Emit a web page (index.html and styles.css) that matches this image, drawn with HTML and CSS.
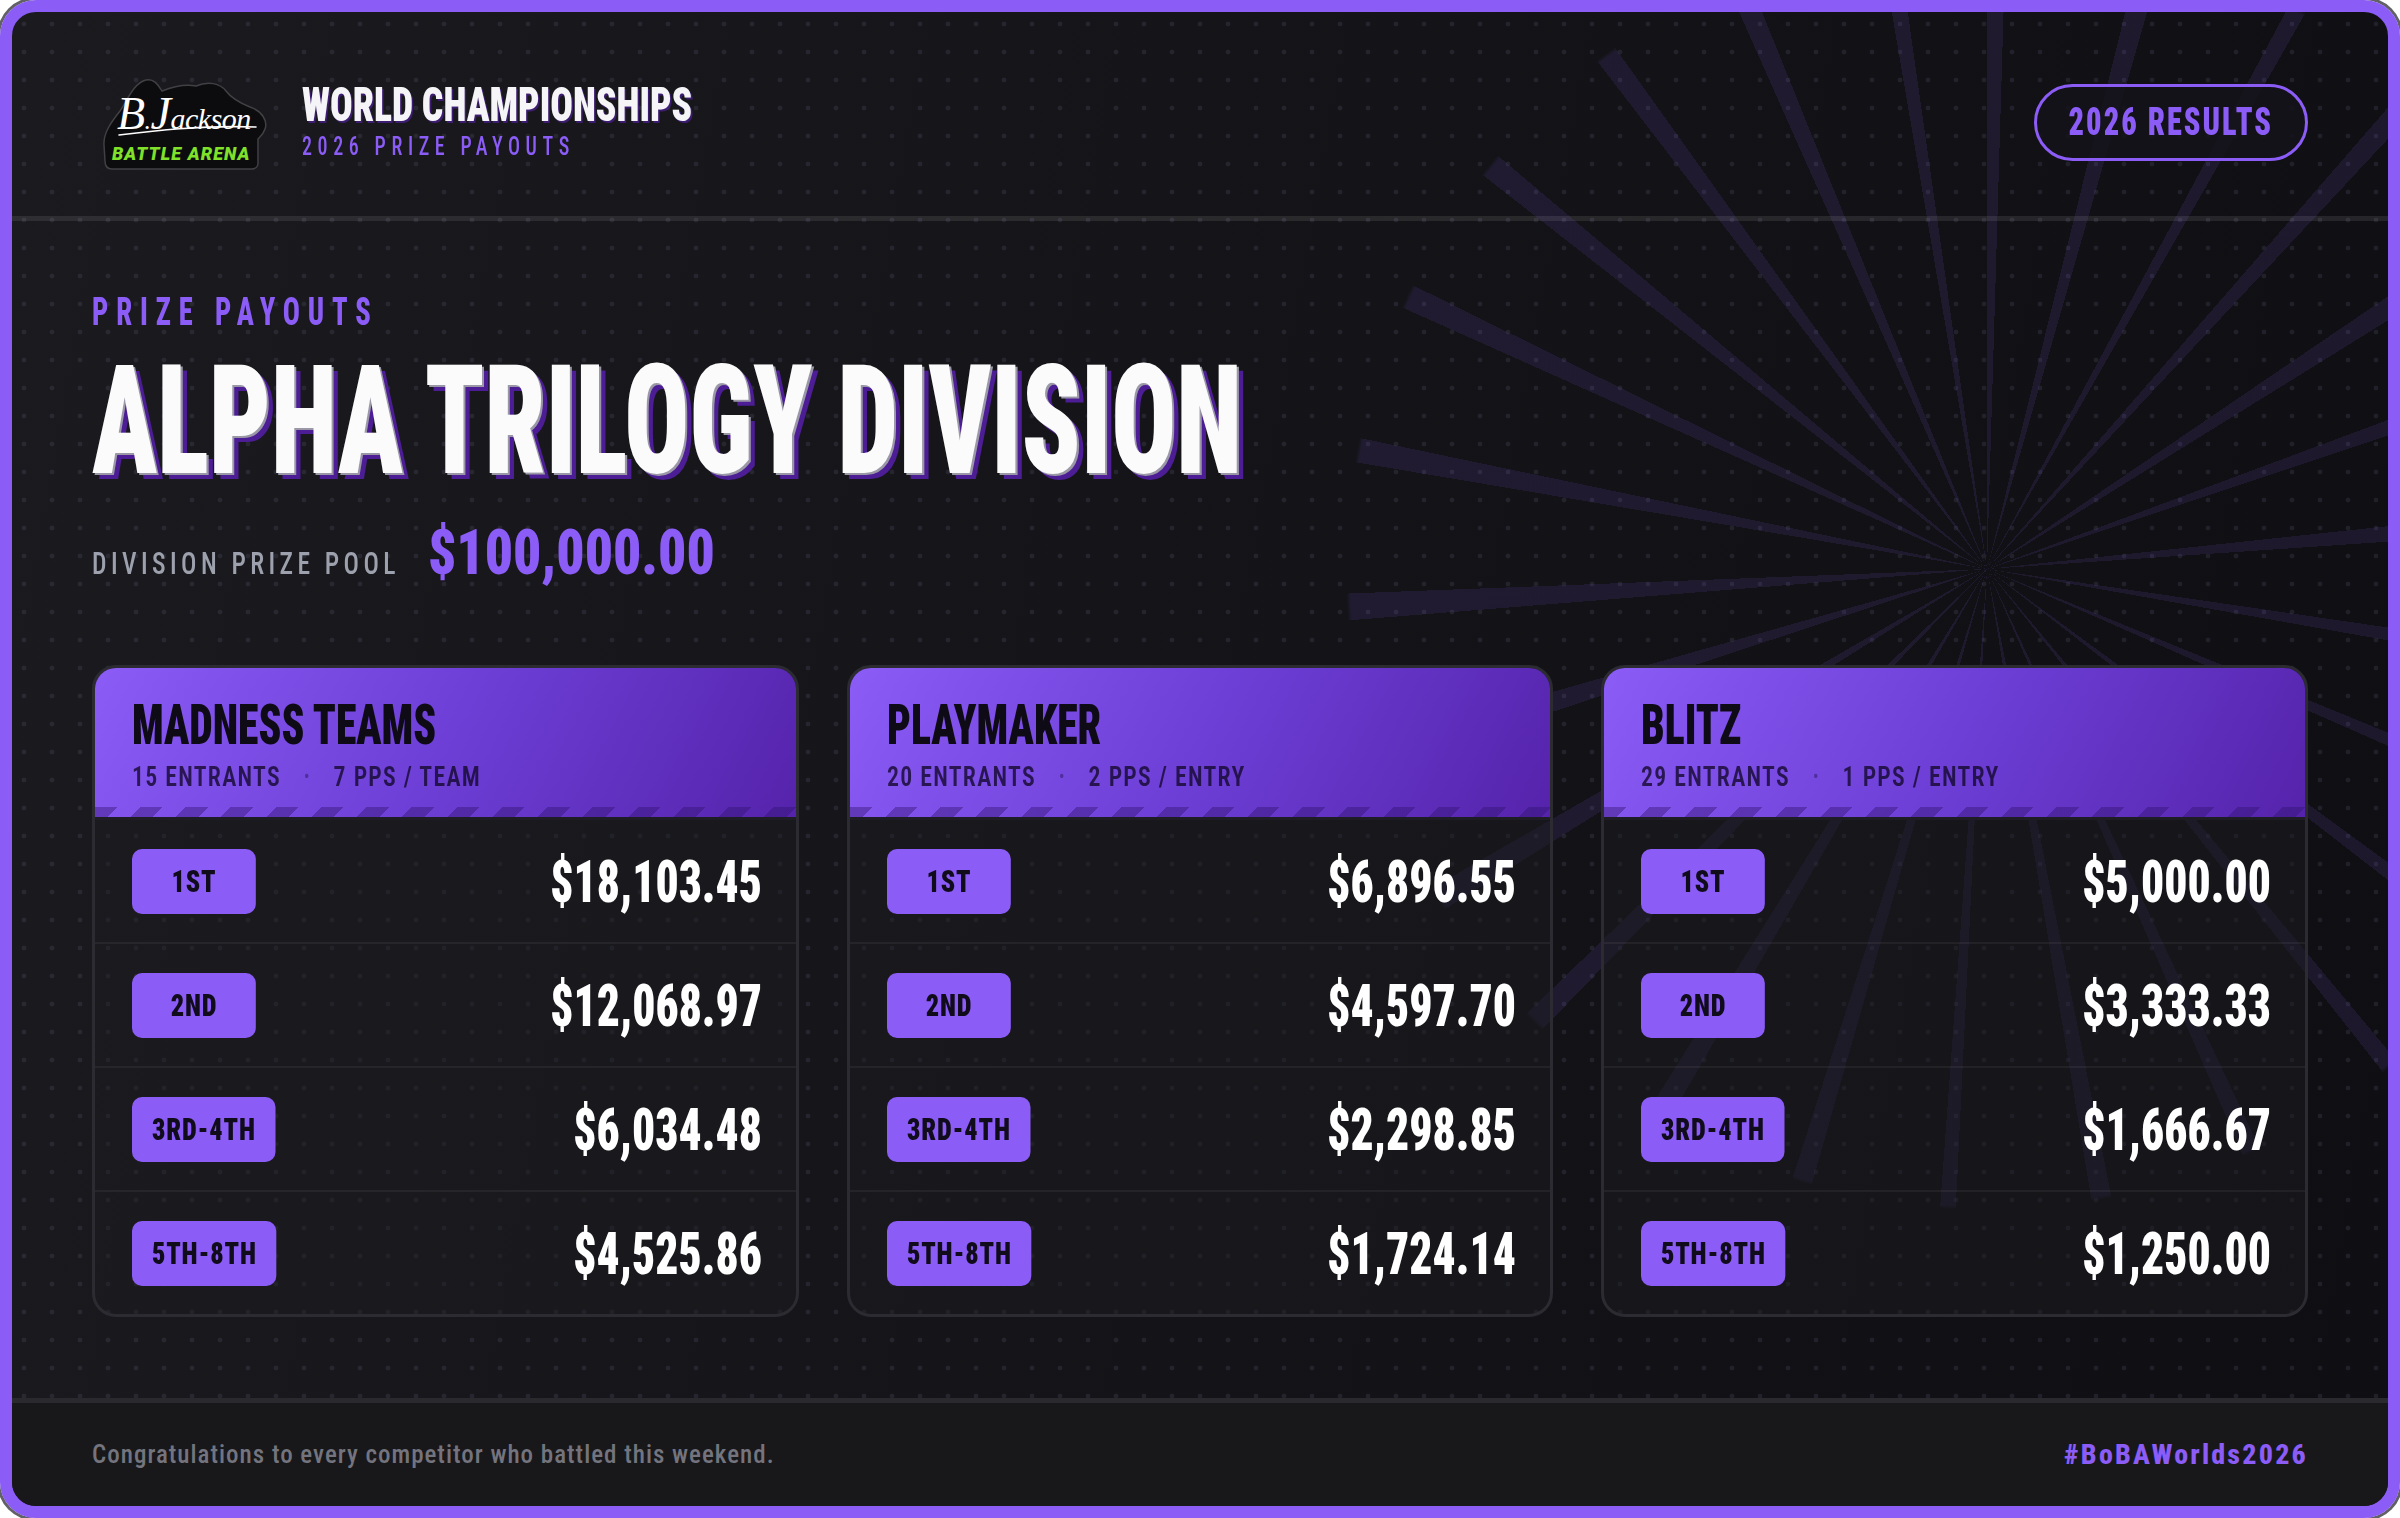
FILE: index.html
```html
<!DOCTYPE html>
<html lang="en">
<head>
<meta charset="utf-8">
<title>World Championships – 2026 Prize Payouts</title>
<link rel="stylesheet" href="styles.css">
</head>
<body>
<div class="frame">
  <div class="rays"></div>

  <header class="top">
    <div class="brand">
      <svg class="logo" width="180" height="100" viewBox="0 0 180 100" aria-label="BJackson Battle Arena">
        <path d="M20 94 C15 94 13 91 13 86 L12 70 C11 58 20 46 28 36 C36 24 42 8 54 5 C62 3 66 10 70 16 C80 12 92 9 104 11 C116 6 128 8 134 16 C140 24 148 28 158 32 C170 36 176 46 173 54 C171 60 168 62 166 64 L166 88 C166 92 163 94 160 94 Z" fill="#0c0c0e" stroke="#414145" stroke-width="1.5"/>
        <text x="25" y="54" class="sig"><tspan font-size="46">B</tspan><tspan font-size="26">.</tspan><tspan font-size="46">J</tspan><tspan font-size="30">ackson</tspan></text>
        <path d="M27 60 C60 56 110 50 164 52" fill="none" stroke="#ffffff" stroke-width="1.6" stroke-linecap="round"/>
        <text x="20" y="85" class="arena">BATTLE ARENA</text>
      </svg>
      <div class="brand-text">
        <div class="brand-title"><span class="sq">WORLD CHAMPIONSHIPS</span></div>
        <div class="brand-sub"><span class="sq">2026 PRIZE PAYOUTS</span></div>
      </div>
    </div>
    <div class="pill"><span class="sq">2026 RESULTS</span></div>
  </header>

  <main class="main">
    <div class="eyebrow"><span class="sq">PRIZE PAYOUTS</span></div>
    <h1 class="title"><span class="sq">ALPHA TRILOGY DIVISION</span></h1>
    <div class="pool">
      <span class="pool-label sq">DIVISION PRIZE POOL</span>
      <span class="pool-amt sq">$100,000.00</span>
    </div>

    <div class="cards">
      <section class="card">
        <div class="card-head">
          <div class="card-title"><span class="sq">MADNESS TEAMS</span></div>
          <div class="card-meta"><span class="sq">15 ENTRANTS<span class="sep">•</span>7 PPS / TEAM</span></div>
          <div class="stripes"></div>
        </div>
        <div class="rows">
          <div class="row"><span class="badge">1ST</span><span class="amt">$18,103.45</span></div>
          <div class="row"><span class="badge">2ND</span><span class="amt">$12,068.97</span></div>
          <div class="row"><span class="badge">3RD-4TH</span><span class="amt">$6,034.48</span></div>
          <div class="row"><span class="badge">5TH-8TH</span><span class="amt">$4,525.86</span></div>
        </div>
      </section>

      <section class="card">
        <div class="card-head">
          <div class="card-title"><span class="sq">PLAYMAKER</span></div>
          <div class="card-meta"><span class="sq">20 ENTRANTS<span class="sep">•</span>2 PPS / ENTRY</span></div>
          <div class="stripes"></div>
        </div>
        <div class="rows">
          <div class="row"><span class="badge">1ST</span><span class="amt">$6,896.55</span></div>
          <div class="row"><span class="badge">2ND</span><span class="amt">$4,597.70</span></div>
          <div class="row"><span class="badge">3RD-4TH</span><span class="amt">$2,298.85</span></div>
          <div class="row"><span class="badge">5TH-8TH</span><span class="amt">$1,724.14</span></div>
        </div>
      </section>

      <section class="card">
        <div class="card-head">
          <div class="card-title"><span class="sq">BLITZ</span></div>
          <div class="card-meta"><span class="sq">29 ENTRANTS<span class="sep">•</span>1 PPS / ENTRY</span></div>
          <div class="stripes"></div>
        </div>
        <div class="rows">
          <div class="row"><span class="badge">1ST</span><span class="amt">$5,000.00</span></div>
          <div class="row"><span class="badge">2ND</span><span class="amt">$3,333.33</span></div>
          <div class="row"><span class="badge">3RD-4TH</span><span class="amt">$1,666.67</span></div>
          <div class="row"><span class="badge">5TH-8TH</span><span class="amt">$1,250.00</span></div>
        </div>
      </section>
    </div>
  </main>

  <footer class="foot">
    <span class="foot-text">Congratulations to every competitor who battled this weekend.</span>
    <span class="hashtag">#BoBAWorlds2026</span>
  </footer>
</div>
</body>
</html>
```
FILE: styles.css
```css
html, body {
  margin: 0;
  padding: 0;
  background: #ffffff;
}

.frame {
  --purple: #8b5cf6;
  position: relative;
  width: 2400px;
  height: 1518px;
  box-sizing: border-box;
  border: 12px solid var(--purple);
  border-radius: 36px;
  box-shadow: 0 0 0 3px #626266;
  overflow: hidden;
  display: flex;
  flex-direction: column;
  font-family: Roboto, "Open Sans", sans-serif;
  font-stretch: 75%;
  background:
    radial-gradient(circle at 12px 12px, rgba(120, 118, 160, 0.16) 2px, transparent 2.7px) 0 0 / 28px 28px,
    linear-gradient(100deg, #1b1b1f 0%, #151519 45%, #0f0f13 100%);
}

/* decorative starburst behind the content */
.rays {
  position: absolute;
  inset: 0;
  z-index: 0;
  pointer-events: none;
  background: conic-gradient(from 0deg at 1975px 557px,
    rgba(139,92,246,.11) 0deg 1.7deg, transparent 1.7deg 13.95deg,
    rgba(139,92,246,.11) 13.95deg 16.05deg, transparent 16.05deg 28.2deg,
    rgba(139,92,246,.11) 28.2deg 29.8deg, transparent 29.8deg 41deg,
    rgba(139,92,246,.11) 41deg 43deg, transparent 43deg 55.8deg,
    rgba(139,92,246,.11) 55.8deg 58.2deg, transparent 58.2deg 69.6deg,
    rgba(139,92,246,.11) 69.6deg 71.6deg, transparent 71.6deg 83.9deg,
    rgba(139,92,246,.11) 83.9deg 86.1deg, transparent 86.1deg 98.3deg,
    rgba(139,92,246,.11) 98.3deg 100.1deg, transparent 100.1deg 112.2deg,
    rgba(139,92,246,.11) 112.2deg 113.8deg, transparent 113.8deg 126.2deg,
    rgba(139,92,246,.11) 126.2deg 127.8deg, transparent 127.8deg 140.2deg,
    rgba(139,92,246,.11) 140.2deg 141.8deg, transparent 141.8deg 154.8deg,
    rgba(139,92,246,.11) 154.8deg 156.4deg, transparent 156.4deg 168.8deg,
    rgba(139,92,246,.11) 168.8deg 170.6deg, transparent 170.6deg 182.8deg,
    rgba(139,92,246,.11) 182.8deg 184.2deg, transparent 184.2deg 195.9deg,
    rgba(139,92,246,.11) 195.9deg 197.7deg, transparent 197.7deg 210deg,
    rgba(139,92,246,.11) 210deg 212deg, transparent 212deg 224deg,
    rgba(139,92,246,.11) 224deg 226deg, transparent 226deg 237.9deg,
    rgba(139,92,246,.11) 237.9deg 240.1deg, transparent 240.1deg 251.8deg,
    rgba(139,92,246,.11) 251.8deg 254.2deg, transparent 254.2deg 265.4deg,
    rgba(139,92,246,.11) 265.4deg 267.8deg, transparent 267.8deg 279.6deg,
    rgba(139,92,246,.11) 279.6deg 281.8deg, transparent 281.8deg 294.1deg,
    rgba(139,92,246,.11) 294.1deg 296.3deg, transparent 296.3deg 308deg,
    rgba(139,92,246,.11) 308deg 310.2deg, transparent 310.2deg 322.5deg,
    rgba(139,92,246,.11) 322.5deg 324.5deg, transparent 324.5deg 336deg,
    rgba(139,92,246,.11) 336deg 338deg, transparent 338deg 350.3deg,
    rgba(139,92,246,.11) 350.3deg 351.9deg, transparent 351.9deg 360deg);
  -webkit-mask-image: radial-gradient(circle at 1975px 557px, #000 637px, transparent 641px);
  mask-image: radial-gradient(circle at 1975px 557px, #000 637px, transparent 641px);
}

.sq {
  display: inline-block;
  transform-origin: left center;
  transform: scaleX(var(--s, 1));
  white-space: nowrap;
}

/* ---------- header ---------- */
.top {
  position: relative;
  z-index: 1;
  height: 209px;
  box-sizing: border-box;
  border-bottom: 5px solid rgba(255, 255, 255, 0.09);
  padding: 16px 80px 0;
  display: flex;
  align-items: center;
  justify-content: space-between;
}

.brand {
  display: flex;
  align-items: center;
  gap: 30px;
}

.logo {
  display: block;
  margin-top: 6px;
}

.logo .sig {
  font-family: "Liberation Serif", "DejaVu Serif", serif;
  font-style: italic;
  fill: #ffffff;
  letter-spacing: -0.5px;
}

.logo .arena {
  font-family: Roboto, sans-serif;
  font-stretch: 100%;
  font-weight: 900;
  font-style: italic;
  font-size: 18px;
  letter-spacing: 1.1px;
  fill: #7fe12a;
}

.brand-text {
  margin-bottom: 6px;
}

.brand-title {
  font-size: 49px;
  line-height: 1;
  font-weight: 900;
  color: #f5f5f7;
  text-shadow: 2px 2px 0 rgba(91, 33, 182, 0.55);
}
.brand-title .sq { --s: .768; }

.brand-sub {
  margin-top: 5px;
  font-size: 25px;
  line-height: 1;
  font-weight: 500;
  letter-spacing: 7px;
  color: var(--purple);
}
.brand-sub .sq { --s: .8; }

.pill {
  width: 274px;
  height: 77px;
  box-sizing: border-box;
  border: 3px solid var(--purple);
  border-radius: 40px;
  background: rgba(20, 19, 26, 0.85);
  display: flex;
  align-items: center;
  justify-content: center;
  font-size: 38px;
  font-weight: 900;
  letter-spacing: 2.5px;
  color: var(--purple);
  line-height: 1;
}
.pill .sq { --s: .8; transform-origin: center; }

/* ---------- main ---------- */
.main {
  position: relative;
  z-index: 1;
  flex: 1;
  padding: 72px 80px 0;
  display: flex;
  flex-direction: column;
}

.eyebrow {
  font-size: 38px;
  line-height: 1;
  font-weight: 800;
  letter-spacing: 10.5px;
  color: var(--purple);
}
.eyebrow .sq { --s: .75; }

.title {
  margin: 13px 0 0;
  font-size: 153px;
  line-height: 1;
  font-weight: 900;
  color: #fbfbfc;
  text-shadow: 3px 2px 0 #9a98a6, 9px 6px 0 #4c1d95;
}
.title .sq { --s: .705; }

.pool {
  margin-top: 24px;
  display: flex;
  align-items: baseline;
  gap: 34px;
  line-height: 1;
}

.pool-label {
  --s: .8;
  font-size: 32px;
  font-weight: 500;
  letter-spacing: 5.5px;
  color: #9da1ad;
  margin-right: -83px;
}

.pool-amt {
  --s: .88;
  font-size: 63px;
  font-weight: 900;
  color: var(--purple);
}

/* ---------- cards ---------- */
.cards {
  margin-top: 81px;
  display: grid;
  grid-template-columns: repeat(3, 1fr);
  gap: 48px;
}

.card {
  border: 3px solid #2b2b31;
  border-radius: 24px;
  overflow: hidden;
  background: rgba(28, 28, 34, 0.45);
}

.card-head {
  padding: 29px 37px 0;
  background: linear-gradient(118deg, #8b5cf6 0%, #6d3fd6 50%, #5523ab 100%);
  border-bottom: 3px solid #1e1c24;
}

.card-title {
  font-size: 56px;
  line-height: 1;
  font-weight: 900;
  color: #0e0b16;
}
.card-title .sq { --s: .745; }

.card-meta {
  margin-top: 10px;
  font-size: 28px;
  line-height: 1;
  font-weight: 600;
  letter-spacing: 1.5px;
  color: rgba(22, 10, 50, 0.82);
  white-space: nowrap;
}
.card-meta .sq { --s: .85; }

.card-meta .sep {
  display: inline-block;
  margin: 0 27px;
  font-size: 18px;
  vertical-align: 3px;
  color: rgba(40, 20, 90, 0.5);
}

.stripes {
  margin: 16px -37px 0;
  height: 10px;
  background: repeating-linear-gradient(135deg, rgba(48, 18, 110, 0.42) 0 16px, transparent 16px 32px);
}

.row {
  height: 122px;
  display: flex;
  align-items: center;
  justify-content: space-between;
  padding: 0 34px 0 37px;
  border-top: 2px solid rgba(255, 255, 255, 0.055);
}
.row:first-child { border-top: 0; }

.badge {
  --s: .82;
  display: inline-flex;
  align-items: center;
  justify-content: center;
  height: 65px;
  min-width: calc(124px / var(--s));
  box-sizing: border-box;
  padding: 0 calc(20px / var(--s));
  border-radius: calc(10px / var(--s)) / 10px;
  background: var(--purple);
  transform: scaleX(var(--s));
  transform-origin: left center;
  font-size: 32px;
  line-height: 1;
  font-weight: 900;
  letter-spacing: 1px;
  color: #100c1c;
}

.amt {
  --s: .77;
  display: inline-block;
  transform: scaleX(var(--s));
  transform-origin: right center;
  font-size: 59px;
  line-height: 1;
  font-weight: 900;
  color: #ffffff;
  white-space: nowrap;
}

/* ---------- footer ---------- */
.foot {
  position: relative;
  z-index: 1;
  height: 108px;
  box-sizing: border-box;
  border-top: 5px solid #29292e;
  background: #18181b;
  padding: 0 80px;
  display: flex;
  align-items: center;
  justify-content: space-between;
}

.foot-text {
  font-size: 25px;
  font-weight: 500;
  letter-spacing: 1px;
  color: #74747e;
}

.hashtag {
  font-size: 28px;
  font-weight: 800;
  letter-spacing: 2.2px;
  color: var(--purple);
}
```
